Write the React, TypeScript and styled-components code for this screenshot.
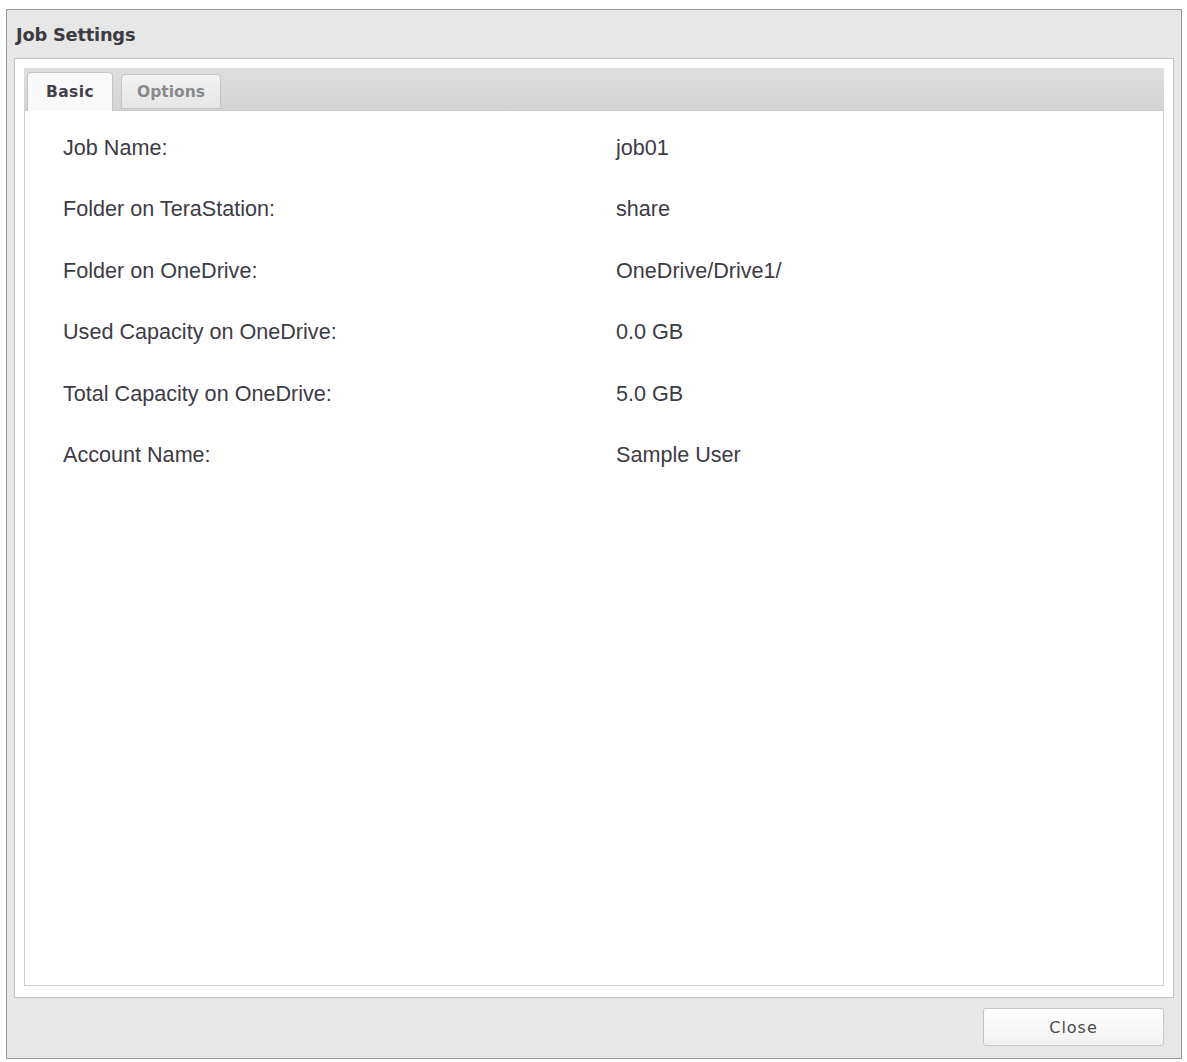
import styled, { createGlobalStyle } from 'styled-components';

const GlobalStyle = createGlobalStyle`
  html, body {
    margin: 0;
    padding: 0;
    background: #ffffff;
  }
  body {
    font-family: "Liberation Sans", Arial, sans-serif;
  }
`;

type Field = { label: string; value: string };

const fields: Field[] = [
  { label: 'Job Name:', value: 'job01' },
  { label: 'Folder on TeraStation:', value: 'share' },
  { label: 'Folder on OneDrive:', value: 'OneDrive/Drive1/' },
  { label: 'Used Capacity on OneDrive:', value: '0.0 GB' },
  { label: 'Total Capacity on OneDrive:', value: '5.0 GB' },
  { label: 'Account Name:', value: 'Sample User' },
];

const App = () => {
  return (
    <>
      <GlobalStyle />
      <Dialog>
        <TitleBar>Job Settings</TitleBar>
        <Panel>
          <TabStrip>
            <Tab $active>Basic</Tab>
            <Tab>Options</Tab>
          </TabStrip>
          <TabBody>
            {fields.map((f) => (
              <Row key={f.label}>
                <Label>{f.label}</Label>
                <Value>{f.value}</Value>
              </Row>
            ))}
          </TabBody>
        </Panel>
        <Footer>
          <Button type="button">Close</Button>
        </Footer>
      </Dialog>
    </>
  );
};

export default App;

// Styled Components
const Dialog = styled.div`
  box-sizing: border-box;
  margin: 9px 0 0 6px;
  width: 1176px;
  height: 1050px;
  border: 1px solid #9a9a9a;
  background: #e7e7e7;
  display: flex;
  flex-direction: column;
`;

const TitleBar = styled.div`
  height: 48px;
  display: flex;
  align-items: center;
  padding-left: 9px;
  font-family: "DejaVu Sans", Verdana, sans-serif;
  font-size: 17.8px;
  font-weight: bold;
  letter-spacing: -0.2px;
  color: #3a3a40;
`;

const Panel = styled.div`
  box-sizing: border-box;
  margin: 0 7px 0 7px;
  height: 940px;
  border: 1px solid #c2c2c2;
  background: #ffffff;
  padding: 9px 9px 11px 9px;
  display: flex;
  flex-direction: column;
`;

const TabStrip = styled.div`
  height: 42px;
  flex-shrink: 0;
  display: flex;
  align-items: flex-end;
  gap: 8px;
  padding-left: 3px;
  background: linear-gradient(#dedede, #d3d3d3);
  border-bottom: 1px solid #cccccc;
`;

const Tab = styled.div<{ $active?: boolean }>`
  box-sizing: border-box;
  height: ${(p) => (p.$active ? '39px' : '35px')};
  margin-bottom: ${(p) => (p.$active ? '-1px' : '1px')};
  padding: 0 ${(p) => (p.$active ? '18px' : '15px')};
  display: flex;
  align-items: center;
  border: 1px solid #c4c4c4;
  border-bottom: ${(p) => (p.$active ? 'none' : '1px solid #c4c4c4')};
  border-radius: 4px 4px 0 0;
  background: ${(p) => (p.$active ? '#f9f9f9' : 'linear-gradient(#f2f2f2, #e6e6e6)')};
  font-family: "DejaVu Sans", Verdana, sans-serif;
  font-size: 15.5px;
  font-weight: bold;
  letter-spacing: ${(p) => (p.$active ? '0.4px' : '0')};
  color: ${(p) => (p.$active ? '#45404c' : '#8a8a8e')};
`;

const TabBody = styled.div`
  flex: 1;
  border: 1px solid #cfcfcf;
  border-top: none;
  padding: 6px 0 0 38px;
`;

const Row = styled.div`
  height: 61.5px;
  display: flex;
  align-items: center;
  font-size: 21.6px;
  color: #3d3b45;
`;

const Label = styled.div`
  width: 553px;
`;

const Value = styled.div``;

const Footer = styled.div`
  flex: 1;
  display: flex;
  justify-content: flex-end;
  align-items: flex-start;
  padding: 10px 17px 0 0;
`;

const Button = styled.button`
  width: 181px;
  height: 38px;
  border: 1px solid #c6c6c6;
  border-radius: 3px;
  background: linear-gradient(#ffffff, #f1f1f1);
  font-family: "DejaVu Sans", Verdana, sans-serif;
  font-size: 16px;
  letter-spacing: 1px;
  color: #4a4a4a;
  cursor: pointer;
`;
